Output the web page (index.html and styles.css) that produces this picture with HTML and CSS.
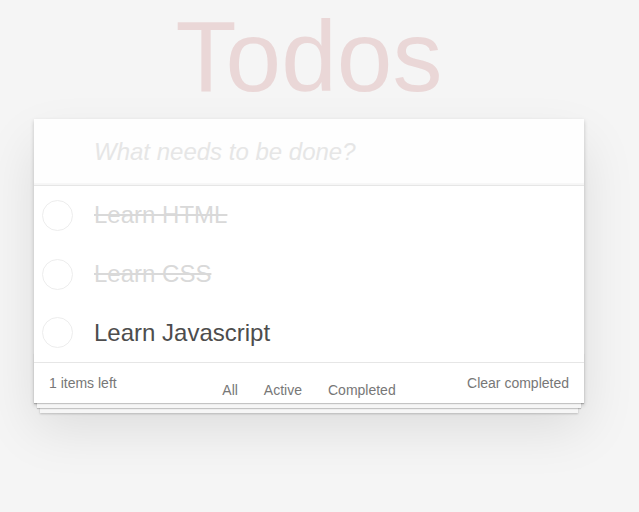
FILE: index.html
```html
<!DOCTYPE html>
<html lang="en">
<head>
<meta charset="utf-8">
<title>Todos</title>
<link rel="stylesheet" href="styles.css">
</head>
<body>
<div class="page">
  <h1 class="title">Todos</h1>
  <section class="todoapp">
    <header class="header">
      <input class="new-todo" placeholder="What needs to be done?">
    </header>
    <ul class="todo-list">
      <li class="todo completed"><span class="toggle"></span><label class="todo-label">Learn HTML</label></li>
      <li class="todo completed"><span class="toggle"></span><label class="todo-label">Learn CSS</label></li>
      <li class="todo"><span class="toggle"></span><label class="todo-label">Learn Javascript</label></li>
    </ul>
    <footer class="footer">
      <span class="todo-count">1 items left</span>
      <ul class="filters">
        <li><a class="filter" href="#/">All</a></li>
        <li><a class="filter" href="#/active">Active</a></li>
        <li><a class="filter" href="#/completed">Completed</a></li>
      </ul>
      <button class="clear-completed">Clear completed</button>
    </footer>
  </section>
</div>
</body>
</html>
```
FILE: styles.css
```css
html, body {
  margin: 0;
  padding: 0;
}
html {
  background: #f5f5f5;
}
body {
  min-height: 512px;
  font-family: "Liberation Sans", Arial, sans-serif;
  color: #4d4d4d;
  font-size: 14px;
  line-height: 1.4em;
}
.page {
  width: 550px;
  margin-left: 34px;
  padding-bottom: 80px;
}
.title {
  margin: 6px 0 13px 0;
  height: 100px;
  font-size: 100px;
  line-height: 100px;
  font-weight: 100;
  text-align: center;
  color: rgba(175, 47, 47, 0.15);
}
.todoapp {
  position: relative;
  background: #fff;
  box-shadow: 0 2px 4px 0 rgba(0,0,0,0.2), 0 25px 50px 0 rgba(0,0,0,0.1);
}
.header {
  display: flex;
}
.new-todo {
  flex: 1;
  margin: 0;
  height: 66px;
  box-sizing: border-box;
  padding: 16px 16px 16px 60px;
  border: none;
  background: rgba(0,0,0,0.003);
  box-shadow: inset 0 -2px 1px rgba(0,0,0,0.03);
  font-family: inherit;
  font-size: 24px;
  line-height: 1.4em;
  color: #4d4d4d;
  outline: none;
}
.new-todo::placeholder {
  font-style: italic;
  font-weight: 300;
  color: #e6e6e6;
}
.todo-list {
  margin: 0;
  padding: 0;
  list-style: none;
  border-top: 1px solid #e6e6e6;
}
.todo {
  display: flex;
  align-items: center;
  font-size: 24px;
}
.toggle {
  flex: none;
  width: 29px;
  height: 29px;
  margin-left: 8px;
  border: 1px solid #ededed;
  border-radius: 50%;
}
.todo-label {
  padding: 15px 15px 15px 21px;
  line-height: 1.2;
  color: #4d4d4d;
}
.completed .todo-label {
  color: #d9d9d9;
  text-decoration: line-through;
}
.footer {
  position: relative;
  display: grid;
  grid-template-columns: 1fr auto 1fr;
  grid-template-rows: 20px;
  align-items: start;
  padding: 10px 15px;
  border-top: 1px solid #e6e6e6;
  color: #777;
}
.footer::before {
  content: '';
  position: absolute;
  right: 0;
  bottom: 0;
  left: 0;
  height: 50px;
  overflow: hidden;
  box-shadow: 0 1px 1px rgba(0,0,0,0.2),
              0 8px 0 -3px #f6f6f6,
              0 9px 1px -3px rgba(0,0,0,0.2),
              0 16px 0 -6px #f6f6f6,
              0 17px 2px -6px rgba(0,0,0,0.2);
}
.todo-count {
  position: relative;
  line-height: 20px;
  justify-self: start;
}
.filters {
  position: relative;
  margin: 6px 0 0 0;
  padding: 0;
  list-style: none;
  display: flex;
  gap: 4px;
  line-height: 20px;
}
.filter {
  display: block;
  color: inherit;
  text-decoration: none;
  padding: 0 7px;
  margin: 0 3px;
  border: 1px solid transparent;
  border-radius: 3px;
}
.clear-completed {
  position: relative;
  justify-self: end;
  margin: 0;
  padding: 0;
  border: none;
  background: none;
  font-family: inherit;
  font-size: 14px;
  line-height: 20px;
  color: #777;
  cursor: pointer;
}
```
